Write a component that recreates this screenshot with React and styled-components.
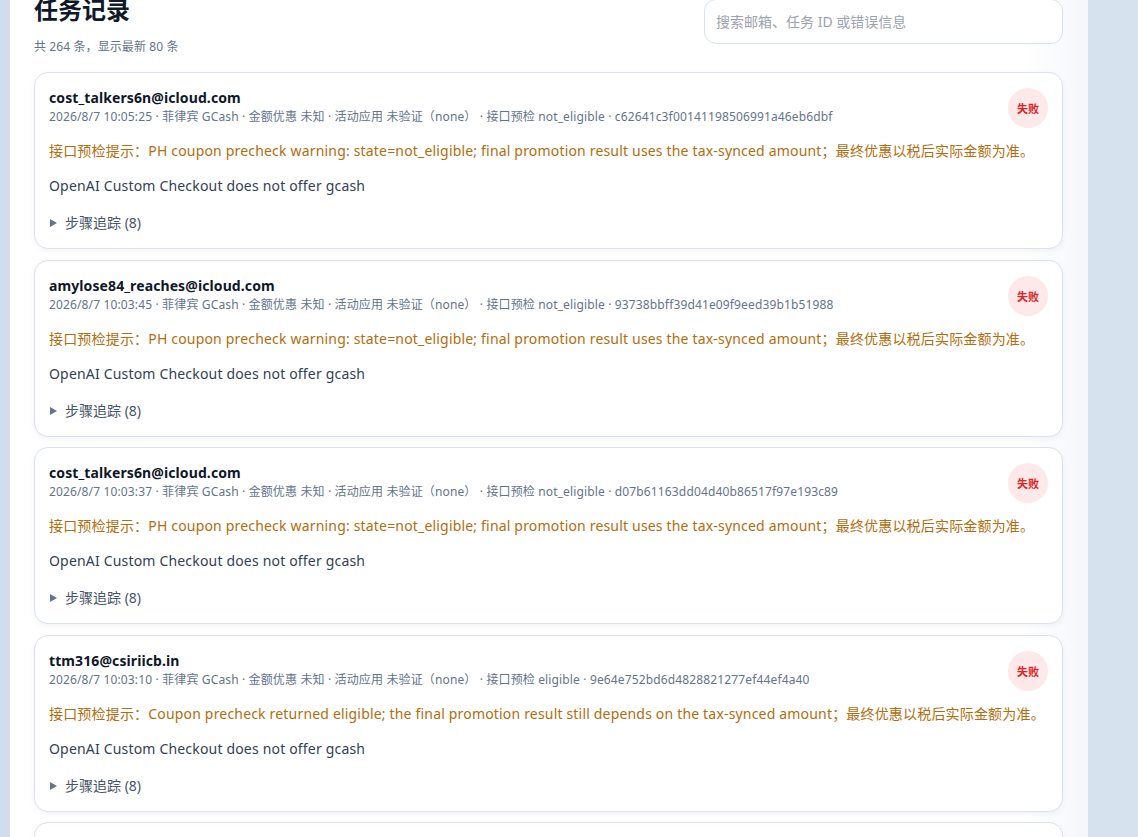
import React from 'react';
import styled, { createGlobalStyle } from 'styled-components';

const GlobalStyle = createGlobalStyle`
    html, body {
        margin: 0;
        padding: 0;
        background: #d2e0ed;
        font-family: "Noto Sans", "Noto Sans CJK SC", sans-serif;
    }
    * { box-sizing: border-box; }
`;

const Page = styled.div`
    min-height: 100vh;
    padding-left: 10px;
    background: linear-gradient(90deg, #cfdeec 0%, #d6e3ef 100%);
`;

const Panel = styled.main`
    width: 1078px;
    margin-top: -30px;
    padding: 24px 25px 40px 24px;
    background: linear-gradient(90deg, #ffffff 0%, #ffffff 94%, #f4f7fb 100%);
`;

const Header = styled.header`
    display: flex;
    justify-content: space-between;
    align-items: flex-start;
`;

const Title = styled.h1`
    margin: 0;
    font-size: 24px;
    line-height: 32px;
    font-weight: 700;
    color: #111827;
`;

const Subtitle = styled.p`
    margin: 12px 0 0;
    font-size: 12px;
    line-height: 18px;
    color: #64748b;
    letter-spacing: 0.1px;
`;

const Search = styled.input`
    width: 359px;
    height: 45px;
    margin-top: 5px;
    padding: 0 11px;
    border: 1px solid #d8e1ee;
    border-radius: 12px;
    background: #fff;
    font-family: inherit;
    font-size: 14px;
    color: #1f2937;
    outline: none;

    &::placeholder {
        color: #9ca3af;
    }
`;

const List = styled.section`
    display: flex;
    flex-direction: column;
    gap: 10.5px;
    margin-top: 16px;
`;

const Card = styled.article`
    padding: 15px 14px;
    border: 1px solid #d9e2ee;
    border-radius: 14px;
    background: #fff;
    box-shadow: 0 2px 6px rgba(15, 23, 42, 0.05);
`;

const CardHead = styled.div`
    display: flex;
    justify-content: space-between;
    align-items: flex-start;
`;

const Email = styled.div`
    font-size: 14px;
    line-height: 20px;
    font-weight: 700;
    color: #0f172a;
    letter-spacing: 0.1px;
`;

const Meta = styled.div`
    font-size: 12px;
    line-height: 18px;
    color: #64748b;
    letter-spacing: 0.14px;
`;

const Badge = styled.span`
    flex: none;
    width: 40px;
    height: 40px;
    border-radius: 50%;
    display: flex;
    align-items: center;
    justify-content: center;
    background: ${p => (p.$ok ? '#dcfce7' : '#fde8ea')};
    color: ${p => (p.$ok ? '#15803d' : '#dc2626')};
    font-size: 11px;
    font-weight: 700;
`;

const Line = styled.p`
    margin: ${p => (p.$warn ? '13px' : '15px')} 0 0;
    font-size: 14px;
    line-height: 20px;
    letter-spacing: 0.18px;
    color: ${p => (p.$warn ? '#b36d0c' : '#334155')};
`;

const Trace = styled.details`
    margin-top: 17px;
    font-size: 14px;
    line-height: 20px;
    color: #475569;

    summary {
        list-style: none;
        display: flex;
        align-items: center;
        gap: 8px;
        cursor: pointer;
    }
    summary::-webkit-details-marker {
        display: none;
    }
`;

const Caret = styled.span`
    width: 0;
    height: 0;
    margin-left: 1px;
    border-left: 7px solid #64748b;
    border-top: 4px solid transparent;
    border-bottom: 4px solid transparent;
`;

const NOT_ELIGIBLE =
    'PH coupon precheck warning: state=not_eligible; final promotion result uses the tax-synced amount；最终优惠以税后实际金额为准。';
const ELIGIBLE =
    'Coupon precheck returned eligible; the final promotion result still depends on the tax-synced amount；最终优惠以税后实际金额为准。';

const tasks = [
    { email: 'cost_talkers6n@icloud.com', time: '2026/8/7 10:05:25', precheck: 'not_eligible', id: 'c62641c3f00141198506991a46eb6dbf' },
    { email: 'amylose84_reaches@icloud.com', time: '2026/8/7 10:03:45', precheck: 'not_eligible', id: '93738bbff39d41e09f9eed39b1b51988' },
    { email: 'cost_talkers6n@icloud.com', time: '2026/8/7 10:03:37', precheck: 'not_eligible', id: 'd07b61163dd04d40b86517f97e193c89' },
    { email: 'ttm316@csiriicb.in', time: '2026/8/7 10:03:10', precheck: 'eligible', id: '9e64e752bd6d4828821277ef44ef4a40' },
    { email: 'amylose84_reaches@icloud.com', time: '2026/8/7 10:02:51', precheck: 'not_eligible', id: '4b1e0f6a2c7d4e58a9f3b6d21c08e7aa' },
];

const TaskCard = ({ task }) => (
    <Card>
        <CardHead>
            <div>
                <Email>{task.email}</Email>
                <Meta>
                    {task.time} · 菲律宾 GCash · 金额优惠 未知 · 活动应用 未验证（none） · 接口预检 {task.precheck} · {task.id}
                </Meta>
            </div>
            <Badge>失败</Badge>
        </CardHead>
        <Line $warn>
            接口预检提示：{task.precheck === 'eligible' ? ELIGIBLE : NOT_ELIGIBLE}
        </Line>
        <Line>OpenAI Custom Checkout does not offer gcash</Line>
        <Trace>
            <summary>
                <Caret />
                步骤追踪 (8)
            </summary>
        </Trace>
    </Card>
);

export default function App() {
    return (
        <Page>
            <GlobalStyle />
            <Panel>
                <Header>
                    <div>
                        <Title>任务记录</Title>
                        <Subtitle>共 264 条，显示最新 80 条</Subtitle>
                    </div>
                    <Search placeholder="搜索邮箱、任务 ID 或错误信息" />
                </Header>
                <List>
                    {tasks.map(t => (
                        <TaskCard key={t.id} task={t} />
                    ))}
                </List>
            </Panel>
        </Page>
    );
}
